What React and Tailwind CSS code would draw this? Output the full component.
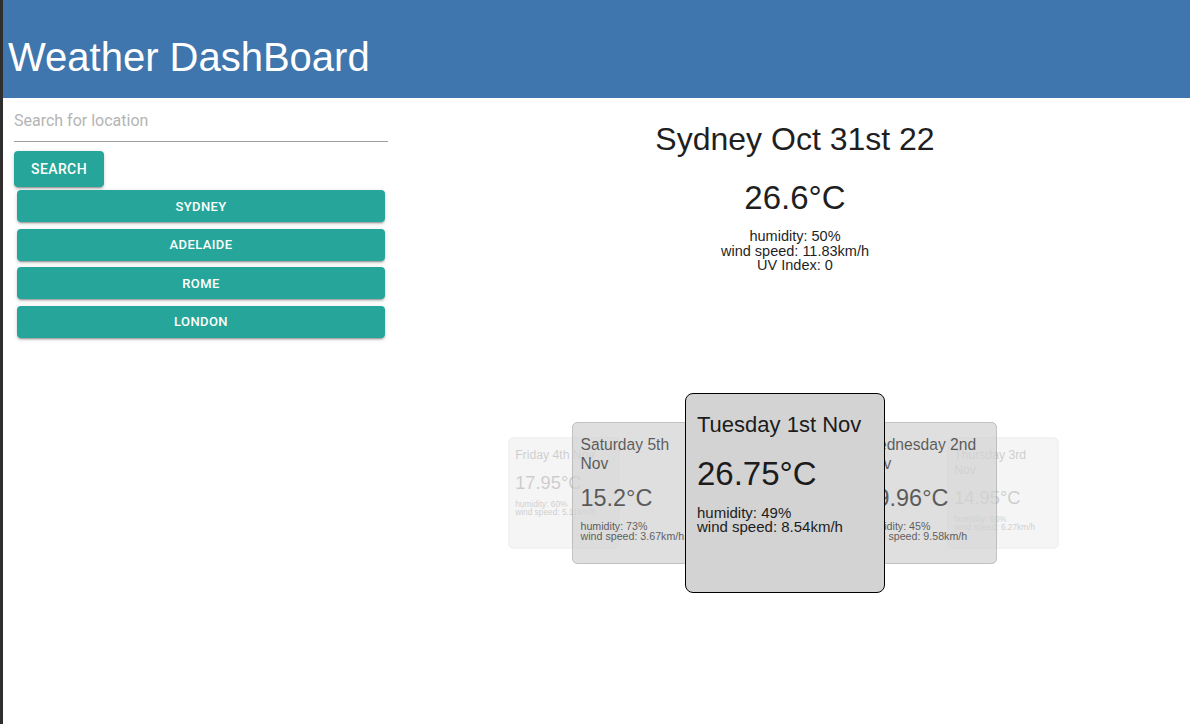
import React from "react";

const cities = ["SYDNEY", "ADELAIDE", "ROME", "LONDON"];

const btnShadow =
  "shadow-[0_3px_1px_-2px_rgba(0,0,0,0.2),0_2px_2px_0_rgba(0,0,0,0.14),0_1px_5px_0_rgba(0,0,0,0.12)]";

function Card({ title, temp, humidity, wind, className }) {
  return (
    <div
      className={
        "absolute left-1/2 top-0 -ml-[100px] h-[200px] w-[200px] rounded-lg border pl-[11px] pr-[20px] pt-[17px] text-[#1c1c1c] " +
        className
      }
    >
      <div className="text-[22px] leading-[27px]">{title}</div>
      <div className="mt-[16px] text-[33px] leading-[40px]">{temp}</div>
      <div className="mt-[12px] text-[15px] leading-[14px] whitespace-nowrap">
        <div>humidity: {humidity}</div>
        <div>wind speed: {wind}</div>
      </div>
    </div>
  );
}

export default function App() {
  return (
    <div
      className="flex h-[724px] w-[1190px] flex-col overflow-hidden border-l-[3px] border-[#2e2e2e] bg-white"
      style={{ fontFamily: '"Liberation Sans", Arial, sans-serif' }}
    >
      <header className="h-[98px] shrink-0 bg-[#4076ae] pl-[5px] pt-[34px]">
        <h1 className="text-[40px] leading-[46px] text-white">Weather DashBoard</h1>
      </header>

      <div className="flex flex-1">
        <aside
          className="w-[397px] shrink-0 pl-[11px] pr-[12px]"
          style={{ fontFamily: "Roboto, sans-serif" }}
        >
          <input
            className="block h-[44px] w-full border-b border-[#9e9e9e] bg-transparent pt-[2px] text-[16px] text-[#333] outline-none placeholder:text-[#b4b4b4]"
            placeholder="Search for location"
          />
          <button
            className={
              "mt-[9px] flex h-[36px] w-[90px] items-center justify-center rounded-[4px] bg-[#26a69a] text-[14px] font-medium tracking-[0.4px] text-white " +
              btnShadow
            }
          >
            SEARCH
          </button>
          <div className="ml-[3px] mt-[3px] flex w-[368px] flex-col gap-[6.5px]">
            {cities.map((c) => (
              <button
                key={c}
                className={
                  "flex h-[32px] w-full items-center justify-center rounded-[4px] bg-[#26a69a] pt-[1px] text-[13px] font-medium tracking-[0.4px] text-white " +
                  btnShadow
                }
              >
                {c}
              </button>
            ))}
          </div>
        </aside>

        <main className="flex flex-1 flex-col items-center pt-[22px] text-[#1f1f1f]">
          <h2 className="text-[32px] leading-[38px]">Sydney Oct 31st 22</h2>
          <div className="mt-[20px] text-[33px] leading-[40px]">26.6°C</div>
          <div className="mt-[11px] text-center text-[14.5px] leading-[14.5px]">
            <div>humidity: 50%</div>
            <div>wind speed: 11.83km/h</div>
            <div>UV Index: 0</div>
          </div>

          <div className="relative mt-[120px] h-[200px] w-full">
            <Card
              title="Friday 4th Nov"
              temp="17.95°C"
              humidity="60%"
              wind="5.11km/h"
              className="z-0 translate-x-[-231px] scale-[0.555] border-[#888] bg-[#d3d3d3] opacity-[0.22]"
            />
            <Card
              title="Thursday 3rd Nov"
              temp="14.95°C"
              humidity="66%"
              wind="6.27km/h"
              className="z-0 translate-x-[208px] scale-[0.555] border-[#888] bg-[#d3d3d3] opacity-[0.22]"
            />
            <Card
              title="Saturday 5th Nov"
              temp="15.2°C"
              humidity="73%"
              wind="3.67km/h"
              className="z-10 translate-x-[-152px] scale-[0.71] border-[#888] bg-[#d3d3d3] opacity-[0.72]"
            />
            <Card
              title="Wednesday 2nd Nov"
              temp="19.96°C"
              humidity="45%"
              wind="9.58km/h"
              className="z-10 translate-x-[131px] scale-[0.71] border-[#888] bg-[#d3d3d3] opacity-[0.72]"
            />
            <Card
              title="Tuesday 1st Nov"
              temp="26.75°C"
              humidity="49%"
              wind="8.54km/h"
              className="z-20 translate-x-[-10px] border-black bg-[#d3d3d3]"
            />
          </div>
        </main>
      </div>
    </div>
  );
}
